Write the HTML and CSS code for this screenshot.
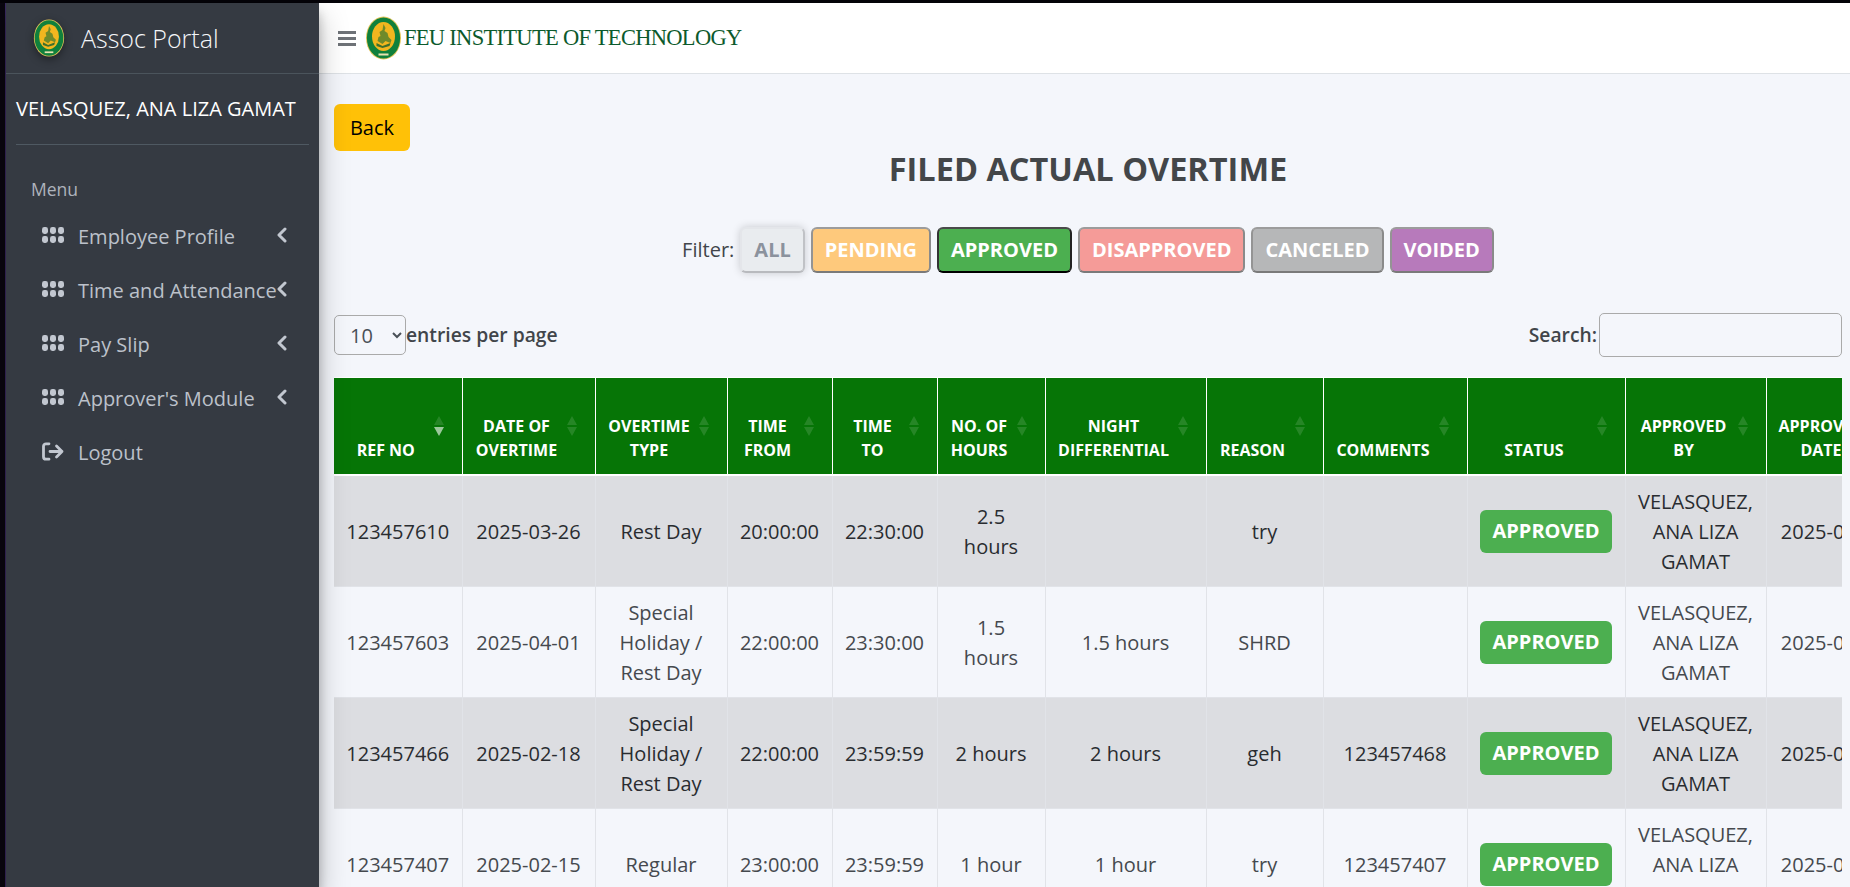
FILE: index.html
```html
<!DOCTYPE html>
<html lang="en">
<head>
    <meta charset="UTF-8">
    <title>Filed Actual Overtime</title>
    <link rel="stylesheet" href="styles.css">
</head>
<body>
    <svg class="defs" width="0" height="0">
        <symbol id="seal" viewBox="0 0 36 44">
            <ellipse cx="18" cy="22" rx="17.5" ry="21.5" fill="#e3c55a"/>
            <ellipse cx="18" cy="22" rx="16.6" ry="20.6" fill="#10803c"/>
            <ellipse cx="18" cy="20.5" rx="11.5" ry="14.5" fill="#f2b61f"/>
            <path d="M18 8l2 4-1 3 3 2 1 4 3 3-1 3-5-2-3 3-5-3 1-4 2-1-1-4 3-2z" fill="#6f8a2a"/>
            <path d="M11 27l6 3 8-3-1 3-7 2-6-2z" fill="#3f6f2c"/>
            <rect x="13" y="37.5" width="10" height="2" fill="#e8e2b0"/>
        </symbol>
        <symbol id="grid" viewBox="0 0 22 16">
            <rect x="0" y="0" width="6" height="7" rx="2.4"/>
            <rect x="8" y="0" width="6" height="7" rx="2.4"/>
            <rect x="16" y="0" width="6" height="7" rx="2.4"/>
            <rect x="0" y="9" width="6" height="7" rx="2.4"/>
            <rect x="8" y="9" width="6" height="7" rx="2.4"/>
            <rect x="16" y="9" width="6" height="7" rx="2.4"/>
        </symbol>
        <symbol id="chevron" viewBox="0 0 10 16">
            <path d="M8 2L2 8l6 6" fill="none" stroke="currentColor" stroke-width="3" stroke-linecap="round" stroke-linejoin="round"/>
        </symbol>
    </svg>

    <div class="top-edge"></div>
    <div class="app">
        <div class="left-edge"></div>
        <aside class="sidebar">
            <div class="brand">
                <svg class="brand-logo"><use href="#seal"/></svg>
                <span class="brand-text">Assoc Portal</span>
            </div>
            <div class="user-name">VELASQUEZ, ANA LIZA GAMAT</div>
            <nav class="menu">
                <div class="menu-header">Menu</div>
                <a class="menu-item">
                    <svg class="menu-icon"><use href="#grid"/></svg>
                    <span>Employee Profile</span>
                    <svg class="menu-arrow"><use href="#chevron"/></svg>
                </a>
                <a class="menu-item">
                    <svg class="menu-icon"><use href="#grid"/></svg>
                    <span>Time and Attendance</span>
                    <svg class="menu-arrow"><use href="#chevron"/></svg>
                </a>
                <a class="menu-item">
                    <svg class="menu-icon"><use href="#grid"/></svg>
                    <span>Pay Slip</span>
                    <svg class="menu-arrow"><use href="#chevron"/></svg>
                </a>
                <a class="menu-item">
                    <svg class="menu-icon"><use href="#grid"/></svg>
                    <span>Approver's Module</span>
                    <svg class="menu-arrow"><use href="#chevron"/></svg>
                </a>
                <a class="menu-item">
                    <svg class="menu-icon logout-icon" viewBox="0 0 22 19">
                        <path d="M7 1.800H4A2.500 2.500 0 0 0 1.500 4.300v10.400A2.500 2.500 0 0 0 4 17.200h3" fill="none" stroke="currentColor" stroke-width="2.800" stroke-linecap="round"/>
                        <path d="M8 9.500h12M14.500 4L20 9.500 14.500 15" fill="none" stroke="currentColor" stroke-width="2.800" stroke-linecap="round" stroke-linejoin="round"/>
                    </svg>
                    <span>Logout</span>
                </a>
            </nav>
        </aside>

        <div class="main">
            <header class="navbar">
                <button class="nav-toggle" aria-label="Menu"><span></span><span></span><span></span></button>
                <svg class="nav-logo"><use href="#seal"/></svg>
                <span class="nav-title">FEU INSTITUTE OF TECHNOLOGY</span>
            </header>

            <div class="content">
                <button class="btn-back">Back</button>
                <h2 class="page-title">FILED ACTUAL OVERTIME</h2>

                <div class="filters">
                    <span class="filter-label">Filter:</span>
                    <button class="filter filter-all">ALL</button>
                    <button class="filter filter-pending">PENDING</button>
                    <button class="filter filter-approved">APPROVED</button>
                    <button class="filter filter-disapproved">DISAPPROVED</button>
                    <button class="filter filter-canceled">CANCELED</button>
                    <button class="filter filter-voided">VOIDED</button>
                </div>

                <div class="table-controls">
                    <label class="per-page">
                        <select class="per-page-select"><option>10</option></select>
                        <span>entries per page</span>
                    </label>
                    <label class="search">
                        <span>Search:</span>
                        <input class="search-input" type="text">
                    </label>
                </div>

                <div class="table-wrap">
                    <table class="ot-table">
                        <colgroup>
                            <col class="c-ref"><col class="c-date"><col class="c-type"><col class="c-from"><col class="c-to"><col class="c-hours"><col class="c-night"><col class="c-reason"><col class="c-comments"><col class="c-status"><col class="c-by"><col class="c-bydate">
                        </colgroup>
                        <thead>
                            <tr>
                                <th class="sorted">REF NO</th>
                                <th>DATE OF OVERTIME</th>
                                <th>OVERTIME TYPE</th>
                                <th>TIME FROM</th>
                                <th>TIME TO</th>
                                <th>NO. OF HOURS</th>
                                <th>NIGHT DIFFERENTIAL</th>
                                <th>REASON</th>
                                <th>COMMENTS</th>
                                <th>STATUS</th>
                                <th>APPROVED BY</th>
                                <th>APPROVED DATE</th>
                            </tr>
                        </thead>
                        <tbody>
                            <tr>
                                <td>123457610</td><td>2025-03-26</td><td>Rest Day</td><td>20:00:00</td><td>22:30:00</td><td>2.5 hours</td><td></td><td>try</td><td></td>
                                <td><span class="badge">APPROVED</span></td>
                                <td>VELASQUEZ, ANA LIZA GAMAT</td><td>2025-03-27</td>
                            </tr>
                            <tr>
                                <td>123457603</td><td>2025-04-01</td><td>Special Holiday / Rest Day</td><td>22:00:00</td><td>23:30:00</td><td>1.5 hours</td><td>1.5 hours</td><td>SHRD</td><td></td>
                                <td><span class="badge">APPROVED</span></td>
                                <td>VELASQUEZ, ANA LIZA GAMAT</td><td>2025-03-27</td>
                            </tr>
                            <tr>
                                <td>123457466</td><td>2025-02-18</td><td>Special Holiday / Rest Day</td><td>22:00:00</td><td>23:59:59</td><td>2 hours</td><td>2 hours</td><td>geh</td><td>123457468</td>
                                <td><span class="badge">APPROVED</span></td>
                                <td>VELASQUEZ, ANA LIZA GAMAT</td><td>2025-02-20</td>
                            </tr>
                            <tr>
                                <td>123457407</td><td>2025-02-15</td><td>Regular</td><td>23:00:00</td><td>23:59:59</td><td>1 hour</td><td>1 hour</td><td>try</td><td>123457407</td>
                                <td><span class="badge">APPROVED</span></td>
                                <td>VELASQUEZ, ANA LIZA GAMAT</td><td>2025-02-16</td>
                            </tr>
                        </tbody>
                    </table>
                </div>
            </div>
        </div>
    </div>
</body>
</html>
```

FILE: styles.css
```css
* {
    box-sizing: border-box;
}
html, body {
    height: 100%;
}
body {
    margin: 0;
    overflow: hidden;
    font-family: "Open Sans", sans-serif;
    font-size: 20px;
    line-height: 30px;
    color: #212529;
    background-color: #f4f6fb;
}
.defs {
    position: absolute;
}
.top-edge {
    height: 3px;
    background-color: #040308;
}
.app {
    display: flex;
    height: calc(100% - 3px);
}
.left-edge {
    flex: 0 0 6px;
    background-color: #0a0710;
    border-right: 1px solid #3b2a63;
}

/* sidebar */
.sidebar {
    flex: 0 0 313px;
    position: relative;
    z-index: 2;
    background-color: #353a42;
    box-shadow: 0 14px 28px rgba(0, 0, 0, 0.25), 0 10px 10px rgba(0, 0, 0, 0.22);
}
.brand {
    display: flex;
    align-items: center;
    height: 71px;
    padding-left: 27px;
    border-bottom: 1px solid #4b545c;
}
.brand-logo {
    width: 32px;
    height: 38px;
    margin-right: 16px;
    filter: drop-shadow(0 3px 4px rgba(0, 0, 0, 0.4));
}
.brand-text {
    font-size: 25px;
    font-weight: 300;
    color: #f4f6f9;
}
.user-name {
    margin: 0 10px 0 10px;
    padding: 20px 0 20px 0;
    height: 71px;
    font-size: 20px;
    color: #ffffff;
    white-space: nowrap;
    border-bottom: 1px solid #4f5962;
}
.menu {
    padding: 29px 0 0 25px;
}
.menu-header {
    font-size: 17.500px;
    line-height: 30px;
    color: #aeb3bc;
    margin-bottom: 6px;
}
.menu-item {
    display: flex;
    align-items: center;
    width: 257px;
    height: 54px;
    padding-left: 11px;
    font-size: 20px;
    color: #bcc1ca;
    white-space: nowrap;
}
.menu-icon {
    flex: none;
    width: 22px;
    height: 16px;
    margin-right: 14px;
    margin-top: -4px;
    fill: #c2c7d0;
    color: #c2c7d0;
}
.logout-icon {
    height: 19px;
}
.menu-arrow {
    flex: none;
    width: 10px;
    height: 16px;
    margin-left: auto;
    margin-right: 1px;
    margin-top: -4px;
    color: #c2c7d0;
}

/* main */
.main {
    flex: 1;
    min-width: 0;
    display: flex;
    flex-direction: column;
}
.navbar {
    display: flex;
    align-items: center;
    height: 71px;
    padding-left: 19px;
    background-color: #ffffff;
    border-bottom: 1px solid #dee2e6;
}
.nav-toggle {
    display: flex;
    flex-direction: column;
    justify-content: space-between;
    width: 18px;
    height: 15px;
    padding: 0;
    margin-right: 9px;
    border: none;
    background: none;
}
.nav-toggle span {
    display: block;
    height: 3px;
    background-color: #6e7277;
}
.nav-logo {
    width: 37px;
    height: 44px;
    margin-right: 2px;
}
.nav-title {
    font-family: "Liberation Serif", serif;
    font-size: 22.500px;
    color: #0c5a2c;
    letter-spacing: -0.700px;
    white-space: nowrap;
}
.content {
    flex: 1;
    padding: 30px 8px 0 15px;
    overflow: hidden;
}
.btn-back {
    display: block;
    width: 76px;
    height: 47px;
    padding: 0;
    font: inherit;
    color: #000000;
    background-color: #ffc107;
    border: none;
    border-radius: 6px;
}
.page-title {
    margin: 0;
    font-size: 32.500px;
    line-height: 36px;
    font-weight: 700;
    text-align: center;
    color: #434649;
}

/* filter buttons */
.filters {
    display: flex;
    justify-content: center;
    align-items: center;
    gap: 6px;
    margin-top: 40px;
}
.filter-label {
    font-size: 20px;
    color: #41454a;
}
.filter {
    height: 46px;
    padding: 0 12px;
    font: inherit;
    font-weight: 700;
    font-size: 20px;
    color: #ffffff;
    border: 2px solid;
    border-color: #9c9c9c #8a8a8a #7a7a7a #949494;
    border-radius: 6px;
}
.filter-all {
    color: #8b929d;
    background-color: #e9ecef;
    border-color: #e4e6ea #c0c2c6 #b8babe #e4e6ea;
    box-shadow: 0 0 8px rgba(0, 0, 0, 0.18);
}
.filter-pending {
    background-color: #fec97c;
}
.filter-approved {
    background-color: #4caf50;
    border-color: #4a4a4a #222222 #000000 #333333;
}
.filter-disapproved {
    background-color: #f59b98;
}
.filter-canceled {
    background-color: #b6b7b8;
}
.filter-voided {
    background-color: #b77abb;
}

/* table controls */
.table-controls {
    display: flex;
    justify-content: space-between;
    align-items: center;
    margin-top: 40px;
    height: 44px;
    font-size: 19.300px;
    font-weight: 600;
    color: #41454a;
}
.per-page, .search {
    display: flex;
    align-items: center;
}
.per-page-select {
    width: 72px;
    height: 40px;
    padding: 0 0 0 11px;
    font-family: inherit;
    font-size: 20px;
    color: #495057;
    background-color: #f4f6fb;
    border: 1px solid #aaaaaa;
    border-radius: 5px;
}
.search span {
    margin-right: 2px;
}
.search-input {
    width: 243px;
    height: 44px;
    background-color: #f4f6fb;
    border: 1px solid #aaaaaa;
    border-radius: 5px;
}

/* table */
.table-wrap {
    margin-top: 20px;
    overflow: hidden;
}
.ot-table {
    table-layout: fixed;
    width: 1566px;
    border-collapse: collapse;
}
.c-ref { width: 128px; }
.c-date { width: 133px; }
.c-type { width: 132px; }
.c-from { width: 105px; }
.c-to { width: 105px; }
.c-hours { width: 108px; }
.c-night { width: 161px; }
.c-reason { width: 117px; }
.c-comments { width: 144px; }
.c-status { width: 158px; }
.c-by { width: 141px; }
.c-bydate { width: 134px; }
.ot-table th {
    position: relative;
    height: 97px;
    padding: 10px 36px 12px 12px;
    vertical-align: bottom;
    text-align: center;
    font-size: 16px;
    line-height: 24px;
    font-weight: 700;
    color: #ffffff;
    background-color: #067506;
    border: 1px solid #ffffff;
    border-width: 1px 1px 2px 1px;
}
.ot-table th:first-child {
    border-left: none;
}
/* sort arrows */
.ot-table th::before, .ot-table th::after {
    content: "";
    position: absolute;
    right: 18px;
    border-left: 5px solid transparent;
    border-right: 5px solid transparent;
}
.ot-table th::before {
    top: 38px;
    border-bottom: 9px solid rgba(255, 255, 255, 0.13);
}
.ot-table th::after {
    top: 49px;
    border-top: 9px solid rgba(255, 255, 255, 0.13);
}
.ot-table th.sorted::after {
    border-top-color: rgba(255, 255, 255, 0.6);
}
.ot-table td {
    height: 111px;
    padding: 11px 12px 9px;
    text-align: center;
    vertical-align: middle;
    border: 1px solid #e1e3e8;
    color: #45494e;
}
.ot-table td:first-child {
    border-left: none;
}
.ot-table tbody tr:nth-child(odd) td {
    background-color: #dcdde1;
    color: #292c30;
}
.badge {
    display: inline-block;
    width: 132px;
    height: 43px;
    line-height: 41px;
    font-weight: 700;
    color: #ffffff;
    background-color: #4caf50;
    border-radius: 6px;
}
```
